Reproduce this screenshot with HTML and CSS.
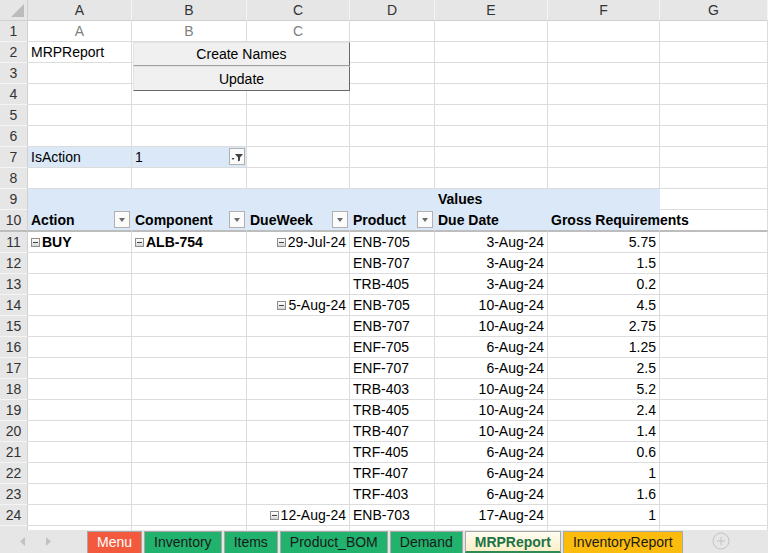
FILE: index.html
```html
<!DOCTYPE html>
<html lang="en">

<head>
    <meta charset="UTF-8">
    <title>MRPReport</title>
    <link rel="stylesheet" href="styles.css">
</head>

<body>
    <div class="sheet">
        <table class="grid">
            <colgroup>
                <col style="width: 28px">
                <col style="width: 104px">
                <col style="width: 115px">
                <col style="width: 103px">
                <col style="width: 85px">
                <col style="width: 113px">
                <col style="width: 112px">
                <col style="width: 108px">
            </colgroup>
            <tr class="colhead">
                <th class="corner"></th>
                <th>A</th>
                <th>B</th>
                <th>C</th>
                <th>D</th>
                <th>E</th>
                <th>F</th>
                <th>G</th>
            </tr>
            <tr>
                <th class="rh">1</th>
                <td class="letter">A</td>
                <td class="letter">B</td>
                <td class="letter">C</td>
                <td></td><td></td><td></td><td></td>
            </tr>
            <tr>
                <th class="rh">2</th>
                <td>MRPReport</td>
                <td></td><td></td><td></td><td></td><td></td><td></td>
            </tr>
            <tr>
                <th class="rh">3</th>
                <td></td><td></td><td></td><td></td><td></td><td></td><td></td>
            </tr>
            <tr>
                <th class="rh">4</th>
                <td></td><td></td><td></td><td></td><td></td><td></td><td></td>
            </tr>
            <tr>
                <th class="rh">5</th>
                <td></td><td></td><td></td><td></td><td></td><td></td><td></td>
            </tr>
            <tr>
                <th class="rh">6</th>
                <td></td><td></td><td></td><td></td><td></td><td></td><td></td>
            </tr>
            <tr>
                <th class="rh">7</th>
                <td class="blue">IsAction</td>
                <td class="blue">
                    <span class="dd filter">
                        <svg width="14" height="13" viewBox="0 0 14 13">
                            <path d="M5 4h8l-3 3.5v3l-2 1v-4z" fill="#444" />
                            <path d="M1.5 8h3l-1.5 2z" fill="#444" />
                        </svg>
                    </span>1
                </td>
                <td></td><td></td><td></td><td></td><td></td>
            </tr>
            <tr>
                <th class="rh">8</th>
                <td></td><td></td><td></td><td></td><td></td><td></td><td></td>
            </tr>
            <tr>
                <th class="rh">9</th>
                <td class="blue nob"></td>
                <td class="blue nob"></td>
                <td class="blue nob"></td>
                <td class="blue nob"></td>
                <td class="blue nob b">Values</td>
                <td class="blue nob"></td>
                <td></td>
            </tr>
            <tr class="frozen">
                <th class="rh">10</th>
                <td class="blue nob b"><span class="dd"></span>Action</td>
                <td class="blue nob b"><span class="dd"></span>Component</td>
                <td class="blue nob b"><span class="dd"></span>DueWeek</td>
                <td class="blue nob b"><span class="dd"></span>Product</td>
                <td class="blue nob b">Due Date</td>
                <td class="blue nob b">Gross Requirements</td>
                <td></td>
            </tr>
            <tr>
                <th class="rh">11</th>
                <td class="b"><span class="exp"></span>BUY</td>
                <td class="b"><span class="exp"></span>ALB-754</td>
                <td class="num"><span class="exp"></span>29-Jul-24</td>
                <td>ENB-705</td>
                <td class="num">3-Aug-24</td>
                <td class="num">5.75</td>
                <td></td>
            </tr>
            <tr>
                <th class="rh">12</th>
                <td></td><td></td><td></td>
                <td>ENB-707</td>
                <td class="num">3-Aug-24</td>
                <td class="num">1.5</td>
                <td></td>
            </tr>
            <tr>
                <th class="rh">13</th>
                <td></td><td></td><td></td>
                <td>TRB-405</td>
                <td class="num">3-Aug-24</td>
                <td class="num">0.2</td>
                <td></td>
            </tr>
            <tr>
                <th class="rh">14</th>
                <td></td><td></td>
                <td class="num"><span class="exp"></span>5-Aug-24</td>
                <td>ENB-705</td>
                <td class="num">10-Aug-24</td>
                <td class="num">4.5</td>
                <td></td>
            </tr>
            <tr>
                <th class="rh">15</th>
                <td></td><td></td><td></td>
                <td>ENB-707</td>
                <td class="num">10-Aug-24</td>
                <td class="num">2.75</td>
                <td></td>
            </tr>
            <tr>
                <th class="rh">16</th>
                <td></td><td></td><td></td>
                <td>ENF-705</td>
                <td class="num">6-Aug-24</td>
                <td class="num">1.25</td>
                <td></td>
            </tr>
            <tr>
                <th class="rh">17</th>
                <td></td><td></td><td></td>
                <td>ENF-707</td>
                <td class="num">6-Aug-24</td>
                <td class="num">2.5</td>
                <td></td>
            </tr>
            <tr>
                <th class="rh">18</th>
                <td></td><td></td><td></td>
                <td>TRB-403</td>
                <td class="num">10-Aug-24</td>
                <td class="num">5.2</td>
                <td></td>
            </tr>
            <tr>
                <th class="rh">19</th>
                <td></td><td></td><td></td>
                <td>TRB-405</td>
                <td class="num">10-Aug-24</td>
                <td class="num">2.4</td>
                <td></td>
            </tr>
            <tr>
                <th class="rh">20</th>
                <td></td><td></td><td></td>
                <td>TRB-407</td>
                <td class="num">10-Aug-24</td>
                <td class="num">1.4</td>
                <td></td>
            </tr>
            <tr>
                <th class="rh">21</th>
                <td></td><td></td><td></td>
                <td>TRF-405</td>
                <td class="num">6-Aug-24</td>
                <td class="num">0.6</td>
                <td></td>
            </tr>
            <tr>
                <th class="rh">22</th>
                <td></td><td></td><td></td>
                <td>TRF-407</td>
                <td class="num">6-Aug-24</td>
                <td class="num">1</td>
                <td></td>
            </tr>
            <tr>
                <th class="rh">23</th>
                <td></td><td></td><td></td>
                <td>TRF-403</td>
                <td class="num">6-Aug-24</td>
                <td class="num">1.6</td>
                <td></td>
            </tr>
            <tr>
                <th class="rh">24</th>
                <td></td><td></td>
                <td class="num"><span class="exp"></span>12-Aug-24</td>
                <td>ENB-703</td>
                <td class="num">17-Aug-24</td>
                <td class="num">1</td>
                <td></td>
            </tr>
            <tr>
                <th class="rh"></th>
                <td></td><td></td><td></td><td></td><td></td><td></td><td></td>
            </tr>
        </table>

        <div class="buttons">
            <button class="macro">Create Names</button>
            <button class="macro">Update</button>
        </div>
    </div>

    <div class="tabs">
        <div class="nav">
            <svg width="6" height="9" viewBox="0 0 6 9"><path d="M5 0v9L0 4.5z" fill="#c2c2c2" /></svg>
            <svg width="6" height="9" viewBox="0 0 6 9"><path d="M1 0v9l5-4.5z" fill="#c2c2c2" /></svg>
        </div>
        <div class="tab red">Menu</div>
        <div class="tab green">Inventory</div>
        <div class="tab green">Items</div>
        <div class="tab green">Product_BOM</div>
        <div class="tab green">Demand</div>
        <div class="tab active">MRPReport</div>
        <div class="tab amber">InventoryReport</div>
        <div class="add">
            <svg width="18" height="18" viewBox="0 0 18 18">
                <circle cx="9" cy="9" r="8" fill="none" stroke="#c4c4c4" />
                <path d="M9 5v8M5 9h8" stroke="#c4c4c4" />
            </svg>
        </div>
    </div>
</body>

</html>
```

FILE: styles.css
```css
html,
body {
    margin: 0;
}

body {
    width: 768px;
    height: 553px;
    overflow: hidden;
    background-color: #fff;
    font-family: "Liberation Sans", Arial, sans-serif;
    font-size: 14px;
    color: #000;
}

.sheet {
    position: relative;
    height: 530px;
    overflow: hidden;
}

.grid {
    width: 768px;
    table-layout: fixed;
    border-collapse: separate;
    border-spacing: 0;
}

.grid tr {
    height: 21px;
}

.grid td,
.grid th {
    padding: 0 3px;
    line-height: 20px;
    white-space: nowrap;
    overflow: visible;
    text-align: left;
    font-weight: normal;
    border-right: 1px solid #dcdcdc;
    border-bottom: 1px solid #dcdcdc;
}

.colhead th {
    background-color: #e6e6e6;
    color: #333;
    text-align: center;
    border-right: 1px solid #f4f4f4;
    border-bottom: 1px solid #d0d0d0;
}

.colhead th.corner {
    position: relative;
    border-right: 1px solid #d0d0d0;
}

.corner::after {
    content: "";
    position: absolute;
    right: 3px;
    bottom: 3px;
    border-style: solid;
    border-width: 0 0 13px 13px;
    border-color: transparent transparent #bcbcbc transparent;
}

.grid th.rh {
    padding: 0;
    background-color: #e6e6e6;
    color: #333;
    text-align: center;
    border-right: 1px solid #d0d0d0;
    border-bottom: 1px solid #f4f4f4;
}

.letter {
    color: #808080;
    text-align: center !important;
}

.blue {
    background-color: #dae8f7;
}

.grid td.nob {
    border-right-color: #dae8f7;
    border-bottom-color: #dae8f7;
}

.b {
    font-weight: bold !important;
}

.num {
    text-align: right !important;
}

.frozen td,
.frozen th {
    border-bottom: 2px solid #bdbdbd !important;
}

.frozen td.nob {
    border-right-color: #dae8f7;
}

/* pivot field dropdowns */
.dd {
    float: right;
    position: relative;
    width: 14px;
    height: 15px;
    margin: 1px -2px 0 0;
    border: 1px solid #b0b0b0;
    background-color: #fbfbfb;
}

.dd::after {
    content: "";
    position: absolute;
    left: 4px;
    top: 6px;
    border-style: solid;
    border-width: 4px 3px 0 3px;
    border-color: #6a6a6a transparent transparent transparent;
}

.dd.filter::after {
    display: none;
}

.dd svg {
    display: block;
    margin-top: 1px;
}

.exp {
    display: inline-block;
    position: relative;
    width: 7px;
    height: 7px;
    margin-right: 2px;
    vertical-align: 0;
    border: 1px solid #8e8e8e;
    background: linear-gradient(#ffffff, #d6d6d6);
}

.exp::after {
    content: "";
    position: absolute;
    left: 1px;
    right: 1px;
    top: 3px;
    height: 1px;
    background-color: #444;
}

/* macro buttons */
.buttons {
    position: absolute;
    left: 133px;
    top: 42px;
    width: 217px;
    display: flex;
    flex-direction: column;
}

.macro {
    height: 24px;
    padding: 0;
    font-family: "Liberation Sans", Arial, sans-serif;
    font-size: 14px;
    color: #000;
    background-color: #f0f0f0;
    border: 1px solid #e3e3e3;
    border-right-color: #696969;
    border-bottom-color: #a0a0a0;
}

.macro + .macro {
    height: 25px;
    border-bottom-color: #696969;
}

/* sheet tabs */
.tabs {
    display: flex;
    align-items: flex-start;
    height: 22px;
    padding-top: 1px;
    background-color: #e6e6e6;
}

.nav {
    width: 87px;
    display: flex;
    align-items: center;
    gap: 19px;
    height: 20px;
    padding-left: 20px;
    box-sizing: border-box;
}

.nav svg {
    display: block;
}

.tab {
    height: 22px;
    line-height: 20px;
    padding: 0 9px;
    margin-right: 2px;
    border: 1px solid #a8a8a8;
    border-bottom: none;
    color: #1a1a1a;
    box-sizing: border-box;
}

.red {
    background-color: #f35a3d;
    color: #fff;
}

.green {
    background-color: #21b26d;
}

.amber {
    background-color: #fbbc0d;
}

.active {
    background: linear-gradient(#fffdf2, #fbefc6);
    color: #217346;
    font-weight: bold;
    border-bottom: 2px solid #2f8a55;
}

.add {
    margin: 1px 0 0 27px;
}

.add svg {
    display: block;
}
```
